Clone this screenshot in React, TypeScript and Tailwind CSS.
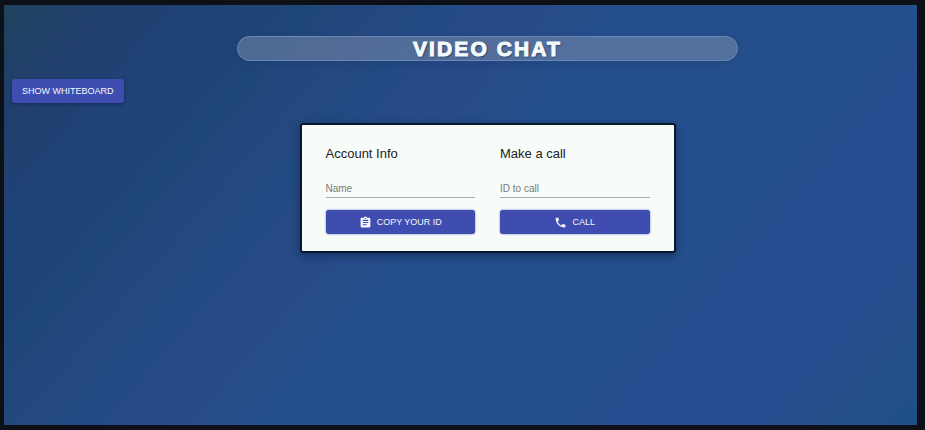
import type { ComponentProps, ReactNode } from "react";
import { MdAssignment, MdPhone } from "react-icons/md";

const backdrop = [
  "bg-[#254f8c]",
  "bg-[linear-gradient(131deg,#20435e_0%,#203f6e_8%,#1f4376_16%,#1f4679_24%,#25487f_30%,#214a82_34%,#264a86_37%,#274b88_42%,#254f8c_48%,#254f8c_70%,#264d90_77%,#264c90_86%,#254e8a_92%,#234f89_96%,#1d4f88_100%)]",
].join(" ");

function Button({ children, className = "", ...rest }: ComponentProps<"button">) {
  return (
    <button
      type="button"
      className={`flex h-6 items-center justify-center gap-[5px] rounded-[3px] bg-[#3f4db0] px-[10px] pt-px text-[9px] font-medium text-[#f4f7ff] uppercase hover:bg-[#303f9f] ${className}`}
      {...rest}
    >
      {children}
    </button>
  );
}

interface PanelProps {
  title: string;
  field: string;
  name: string;
  action: string;
  icon: ReactNode;
}

function Panel({ title, field, name, action, icon }: PanelProps) {
  return (
    <section className="flex flex-col">
      <h2 className="text-[13px] leading-5 text-[#1c2123]">{title}</h2>
      <input
        type="text"
        name={name}
        aria-label={field}
        placeholder={field}
        className="mt-4 h-[18px] w-full border-b border-[#a9ada9] bg-transparent text-[10px] text-[#1c2123] outline-none placeholder:text-[#777b79]"
      />
      <Button className="mt-3 w-full shadow-[0_0_2px_#5361c4]">
        {icon}
        {action}
      </Button>
    </section>
  );
}

export default function App() {
  return (
    <div className="flex min-h-screen bg-[#0d1017] py-[5px] pr-2 pl-1 font-['Liberation_Sans',Arial,sans-serif]">
      <div className={`flex flex-1 flex-col px-2 pt-[31px] pb-8 ${backdrop}`}>
        <header className="flex justify-center pl-[54px]">
          <h1 className="w-full max-w-[501px] rounded-full border border-[#6a87b5] bg-[#a9b0c2]/35 text-center text-[21px] leading-[23px] font-bold tracking-widest text-[#f4fbfb] shadow-[0_2px_6px_#1b3a7066] [-webkit-text-stroke:1px_#f4fbfb] [text-shadow:1px_1px_2px_#1c3a5c]">
            VIDEO CHAT
          </h1>
        </header>
        <Button className="mt-[18px] self-start shadow-[0_1px_3px_#14275a]">Show Whiteboard</Button>
        <main className="mt-5 flex justify-center pl-[54px]">
          <form className="grid w-full max-w-[376px] grid-cols-2 gap-x-[25px] rounded-[3px] border-2 border-[#08182c] bg-[#f7fcf8] px-6 pt-[19px] pb-[17px] shadow-[0_3px_8px_#10254fb3]">
            <Panel
              title="Account Info"
              field="Name"
              name="name"
              action="Copy Your ID"
              icon={<MdAssignment className="size-[13px]" aria-hidden />}
            />
            <Panel
              title="Make a call"
              field="ID to call"
              name="callId"
              action="Call"
              icon={<MdPhone className="size-[13px]" aria-hidden />}
            />
          </form>
        </main>
      </div>
    </div>
  );
}
